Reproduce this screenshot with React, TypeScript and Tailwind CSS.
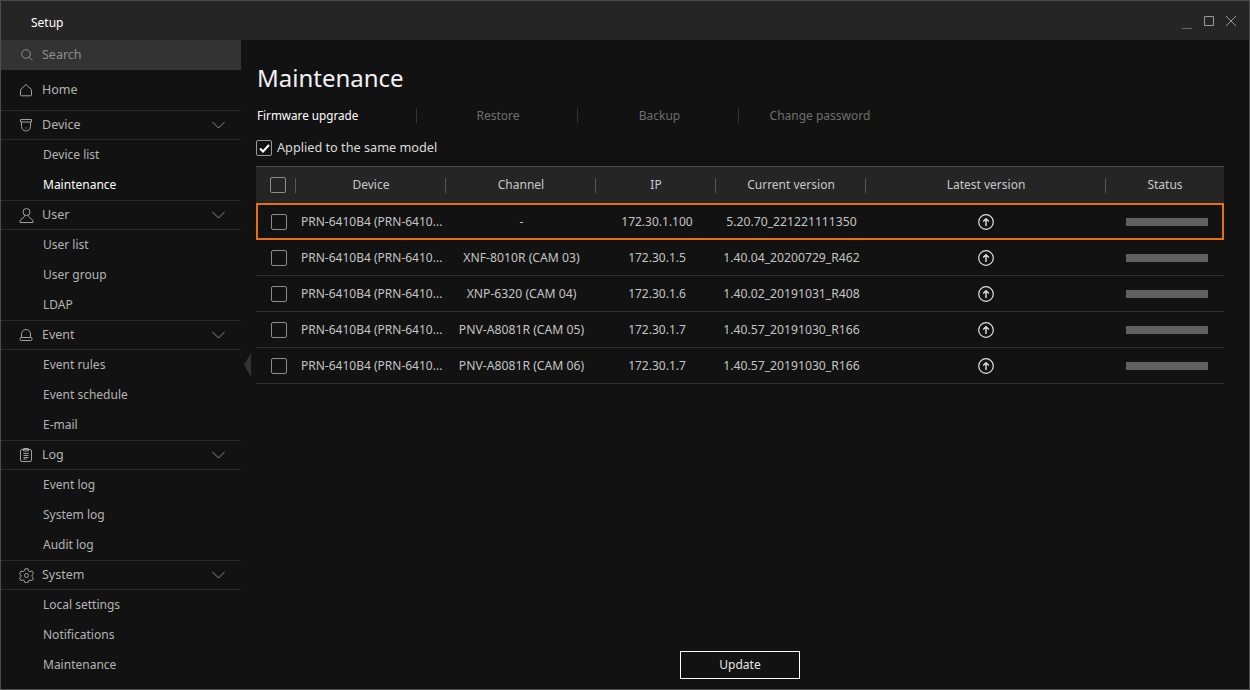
import React from "react";

const Svg = ({ children, s = 14 }: { children: React.ReactNode; s?: number }) => (
  <svg width={s} height={s} viewBox={`0 0 ${s} ${s}`} fill="none" stroke="currentColor" strokeWidth={1}>
    {children}
  </svg>
);

const HomeIcon = () => (
  <Svg><path d="M7 1.500 12.500 6.500V12a.8.8 0 0 1-.8.8H2.300a.8.800 0 0 1-.8-.8V6.500z" /></Svg>
);
const DomeIcon = () => (
  <Svg><path d="M1.500 1.500h11v2.500h-11zM2.500 4v4.500c0 2.500 2 4.500 4.500 4.500s4.500-2 4.500-4.500V4" /><path d="M7 9.500v1" /></Svg>
);
const UserIcon = () => (
  <Svg s={15}><circle cx="7.500" cy="4" r="3.500" /><path d="M5.500 7.200v1.300L1 12.500v2h13v-2L9.500 8.500V7.200" /></Svg>
);
const BellIcon = () => (
  <Svg><path d="M2.500 9.500V6a4.500 4.500 0 0 1 9 0v3.500" /><rect x="1" y="9.500" width="12" height="3" rx="1.200" /></Svg>
);
const LogIcon = () => (
  <svg width="14" height="14" viewBox="0 0 14 14" fill="none" stroke="currentColor">
    <rect x="1.500" y="1.500" width="11" height="12" rx="1.500" />
    <path d="M4.500 .500h5v2.500h-5z" />
    <path d="M4.500 5.500h5M4.500 7.500h5M4.500 9.500h5M4.500 11h3" />
  </svg>
);
const GearIcon = () => (
  <Svg s={15}>
    <circle cx="7.500" cy="7.500" r="2" />
    <path d="M6 .800h3l.5 2 1.500.8 2-.6 1.500 2.600-1.500 1.400v1.600l1.500 1.400-1.500 2.600-2-.6-1.500.8-.5 2H6l-.5-2-1.500-.8-2 .6L.500 10 2 8.600V7L.500 5.600 2 3l2 .6 1.500-.8z" />
  </Svg>
);
const Chevron = () => (
  <svg width="13" height="8" viewBox="0 0 13 8" fill="none" stroke="#8a8a8a" strokeWidth={1}><path d="M.5 1 6.500 7l6-6" /></svg>
);

const SidebarHead = ({ icon, label }: { icon: React.ReactNode; label: string }) => (
  <div className="flex h-[30px] items-center border-y border-[#2a2a2a] pr-[16px] text-[12.500px] text-[#b4b4b4]">
    <span className="flex w-[41px] justify-end pr-[8px] text-[#a0a0a0]"><span className="flex w-[16px] justify-center">{icon}</span></span>
    <span className="flex-1">{label}</span>
    <Chevron />
  </div>
);
const SidebarItem = ({ label, active }: { label: string; active?: boolean }) => (
  <div className={`flex h-[30px] items-center pl-[42px] ${active ? "text-white" : "text-[#b4b4b4]"}`}>{label}</div>
);

const groups: { icon: React.ReactNode; label: string; items: string[] }[] = [
  { icon: <DomeIcon />, label: "Device", items: ["Device list", "Maintenance"] },
  { icon: <UserIcon />, label: "User", items: ["User list", "User group", "LDAP"] },
  { icon: <BellIcon />, label: "Event", items: ["Event rules", "Event schedule", "E-mail"] },
  { icon: <LogIcon />, label: "Log", items: ["Event log", "System log", "Audit log"] },
  { icon: <GearIcon />, label: "System", items: ["Local settings", "Notifications", "Maintenance"] },
];

const Box = () => <span className="block h-[16px] w-[16px] rounded-[2px] border border-[#8c8c8c]" />;

const cols = "grid grid-cols-[40px_150px_150px_120px_150px_240px_118px]";

const heads = ["Device", "Channel", "IP", "Current version", "Latest version", "Status"];

const rows = [
  ["-", "172.30.1.100", "5.20.70_221221111350"],
  ["XNF-8010R (CAM 03)", "172.30.1.5", "1.40.04_20200729_R462"],
  ["XNP-6320 (CAM 04)", "172.30.1.6", "1.40.02_20191031_R408"],
  ["PNV-A8081R (CAM 05)", "172.30.1.7", "1.40.57_20191030_R166"],
  ["PNV-A8081R (CAM 06)", "172.30.1.7", "1.40.57_20191030_R166"],
];

const Sep = () => <span className="absolute right-0 top-[11px] h-[15px] w-px bg-[#555]" />;

const UpIcon = () => (
  <svg width="16" height="16" viewBox="0 0 16 16" fill="none" stroke="#e0e0e0" strokeWidth={1.2}>
    <circle cx="8" cy="8" r="7.300" />
    <path d="M8 12V4.800M5.200 7.500 8 4.700l2.800 2.800" strokeWidth={1.4} />
  </svg>
);

const Row = ({ r, selected }: { r: string[]; selected: boolean }) => (
  <div className={`${cols} items-center pt-px text-[#c4c4c4] ${selected ? "h-[37px] outline-2 -outline-offset-2 outline-[#e8710f]" : "h-[36px] border-b border-[#2e2e2e]"}`}>
    <span className="pl-[15px]"><Box /></span>
    <span className="whitespace-nowrap pl-[5px]">PRN-6410B4 (PRN-6410...</span>
    <span className="whitespace-nowrap pl-px text-center text-[12.200px]">{r[0]}</span>
    <span className="pl-[2px] text-center">{r[1]}</span>
    <span className="whitespace-nowrap pl-px text-center text-[12.200px]">{r[2]}</span>
    <span className="flex justify-center"><UpIcon /></span>
    <span className="pl-[20px]"><span className="block h-[8px] w-[82px] bg-[#606060]" /></span>
  </div>
);

export default function App() {
  return (
    <div className="relative flex h-[690px] w-[1250px] flex-col overflow-hidden border border-[#4c4c4c] bg-[#121212] font-['Noto_Sans',sans-serif] text-[12px]">
      <header className="flex h-[39px] shrink-0 items-center bg-[#252525] pl-[30px] pr-[13px] pt-[5px] text-white">
        <span className="flex-1">Setup</span>
        <div className="-mt-[5px] flex items-center gap-[12px]">
          <svg width="10" height="10" viewBox="0 0 10 10" stroke="#666" className="mt-[6px]"><path d="M0 9.500h10" /></svg>
          <svg width="10" height="10" viewBox="0 0 10 10" fill="none" stroke="#999"><path d="M.5.5h9v9h-9z" /></svg>
          <svg width="10" height="10" viewBox="0 0 10 10" fill="none" stroke="#999"><path d="M0 0l10 10M10 0 0 10" /></svg>
        </div>
      </header>
      <div className="flex min-h-0 flex-1">
        <aside className="w-[240px] shrink-0 overflow-hidden">
          <div className="flex h-[30px] items-center bg-[#333333] pl-[20px] text-[12.500px] text-[#8e8e8e]">
            <svg width="12" height="12" viewBox="0 0 12 12" fill="none" stroke="#8a8a8a" className="mr-[9px]"><circle cx="5" cy="5" r="4.300" /><path d="m8 8 3.500 3.500" /></svg>
            Search
          </div>
          <div className="flex h-[40px] items-center text-[12.500px] text-[#b4b4b4]">
            <span className="flex w-[41px] justify-end pr-[8px] text-[#a0a0a0]"><span className="flex w-[16px] justify-center"><HomeIcon /></span></span>
            Home
          </div>
          {groups.map((g) => (
            <div key={g.label}>
              <SidebarHead icon={g.icon} label={g.label} />
              {g.items.map((it, i) => (
                <SidebarItem key={it} label={it} active={g.label === "Device" && i === 1} />
              ))}
            </div>
          ))}
        </aside>
        <main className="relative min-w-0 flex-1 pl-[15px]">
          <span className="absolute left-[3px] top-[313px] h-0 w-0 border-y-[12px] border-r-[7px] border-y-transparent border-r-[#333]" />
          <h1 className="mt-[21px] h-[34px] pl-[1px] text-[24px] leading-[34px] text-[#f2f2f2]">Maintenance</h1>
          <div className="mt-[5px] flex h-[30px] items-center text-[#6e6e6e]">
            <span className="relative h-[15px] w-[161px] pl-[1px] text-[11.700px] leading-[15px] text-white">Firmware upgrade<span className="absolute right-0 top-0 h-[15px] w-px bg-[#333]" /></span>
            <span className="relative h-[15px] w-[161px] pl-px text-center leading-[15px]">Restore<span className="absolute right-0 top-0 h-[15px] w-px bg-[#333]" /></span>
            <span className="relative h-[15px] w-[161px] pl-[2px] text-center leading-[15px]">Backup<span className="absolute right-0 top-0 h-[15px] w-px bg-[#333]" /></span>
            <span className="h-[15px] w-[162px] text-center leading-[15px]">Change password</span>
          </div>
          <div className="mt-[8px] flex h-[20px] items-center gap-[5px] text-[12.700px] text-[#dcdcdc]">
            <span className="flex h-[16px] w-[16px] items-center justify-center rounded-[2px] border border-[#9a9a9a]">
              <svg width="11" height="9" viewBox="0 0 11 9" fill="none" stroke="#fff" strokeWidth={2}><path d="M1 4.500 4 7.500 10 1" /></svg>
            </span>
            Applied to the same model
          </div>
          <div className="mt-[8px] w-[968px]">
            <div className={`${cols} h-[37px] items-center border-t border-[#4c4c4c] bg-[#252525] text-[#c8c8c8]`}>
              <span className="relative flex h-full items-center pl-[14px]"><Box /><Sep /></span>
              {heads.map((h, i) => (
                <span key={h} className="relative flex h-full items-center justify-center">
                  {h}
                  {i < 5 && <Sep />}
                </span>
              ))}
            </div>
            {rows.map((r, i) => (
              <Row key={i} r={r} selected={i === 0} />
            ))}
          </div>
          <button className="absolute bottom-[10px] left-[439px] h-[28px] w-[120px] border border-white bg-transparent text-[#e6e6e6]">Update</button>
        </main>
      </div>
    </div>
  );
}
